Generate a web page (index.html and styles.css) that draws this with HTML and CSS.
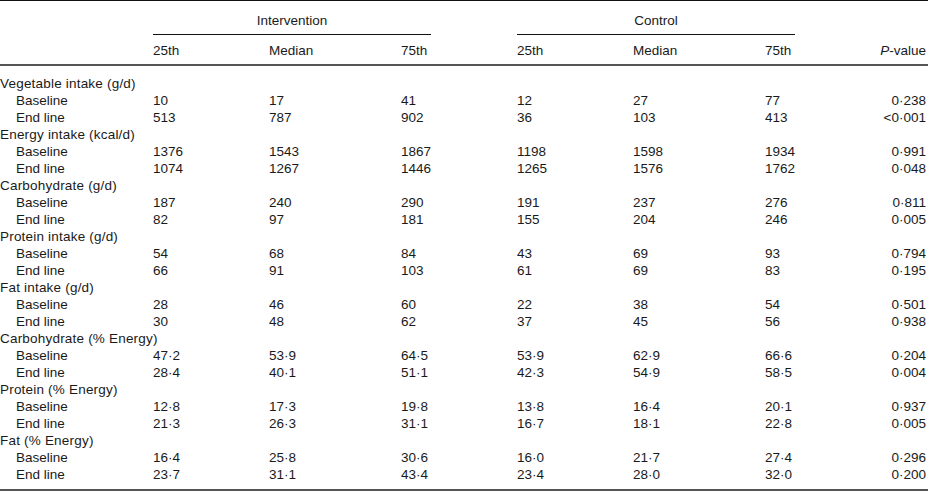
FILE: index.html
```html
<!DOCTYPE html>
<html lang="en">
<head>
<meta charset="utf-8">
<title>Dietary intake table</title>
<link rel="stylesheet" href="styles.css">
</head>
<body>
<table class="tbl">
  <colgroup>
    <col class="c-label">
    <col class="c-a">
    <col class="c-b">
    <col class="c-c">
    <col class="c-gap">
    <col class="c-a">
    <col class="c-b">
    <col class="c-c">
    <col class="c-p">
  </colgroup>
  <thead>
    <tr class="h1">
      <th></th>
      <th colspan="3" class="grp">Intervention</th>
      <th></th>
      <th colspan="3" class="grp">Control</th>
      <th></th>
    </tr>
    <tr class="h2">
      <th></th>
      <th>25th</th><th>Median</th><th>75th</th>
      <th></th>
      <th>25th</th><th>Median</th><th>75th</th>
      <th class="p"><i>P</i>-value</th>
    </tr>
  </thead>
  <tbody>
    <tr><td class="lab">Vegetable intake (g/d)</td><td></td><td></td><td></td><td></td><td></td><td></td><td></td><td></td></tr>
    <tr><td class="sub">Baseline</td><td>10</td><td>17</td><td>41</td><td></td><td>12</td><td>27</td><td>77</td><td class="p">0·238</td></tr>
    <tr><td class="sub">End line</td><td>513</td><td>787</td><td>902</td><td></td><td>36</td><td>103</td><td>413</td><td class="p">&lt;0·001</td></tr>

    <tr><td class="lab">Energy intake (kcal/d)</td><td></td><td></td><td></td><td></td><td></td><td></td><td></td><td></td></tr>
    <tr><td class="sub">Baseline</td><td>1376</td><td>1543</td><td>1867</td><td></td><td>1198</td><td>1598</td><td>1934</td><td class="p">0·991</td></tr>
    <tr><td class="sub">End line</td><td>1074</td><td>1267</td><td>1446</td><td></td><td>1265</td><td>1576</td><td>1762</td><td class="p">0·048</td></tr>

    <tr><td class="lab">Carbohydrate (g/d)</td><td></td><td></td><td></td><td></td><td></td><td></td><td></td><td></td></tr>
    <tr><td class="sub">Baseline</td><td>187</td><td>240</td><td>290</td><td></td><td>191</td><td>237</td><td>276</td><td class="p">0·811</td></tr>
    <tr><td class="sub">End line</td><td>82</td><td>97</td><td>181</td><td></td><td>155</td><td>204</td><td>246</td><td class="p">0·005</td></tr>

    <tr><td class="lab">Protein intake (g/d)</td><td></td><td></td><td></td><td></td><td></td><td></td><td></td><td></td></tr>
    <tr><td class="sub">Baseline</td><td>54</td><td>68</td><td>84</td><td></td><td>43</td><td>69</td><td>93</td><td class="p">0·794</td></tr>
    <tr><td class="sub">End line</td><td>66</td><td>91</td><td>103</td><td></td><td>61</td><td>69</td><td>83</td><td class="p">0·195</td></tr>

    <tr><td class="lab">Fat intake (g/d)</td><td></td><td></td><td></td><td></td><td></td><td></td><td></td><td></td></tr>
    <tr><td class="sub">Baseline</td><td>28</td><td>46</td><td>60</td><td></td><td>22</td><td>38</td><td>54</td><td class="p">0·501</td></tr>
    <tr><td class="sub">End line</td><td>30</td><td>48</td><td>62</td><td></td><td>37</td><td>45</td><td>56</td><td class="p">0·938</td></tr>

    <tr><td class="lab">Carbohydrate (% Energy)</td><td></td><td></td><td></td><td></td><td></td><td></td><td></td><td></td></tr>
    <tr><td class="sub">Baseline</td><td>47·2</td><td>53·9</td><td>64·5</td><td></td><td>53·9</td><td>62·9</td><td>66·6</td><td class="p">0·204</td></tr>
    <tr><td class="sub">End line</td><td>28·4</td><td>40·1</td><td>51·1</td><td></td><td>42·3</td><td>54·9</td><td>58·5</td><td class="p">0·004</td></tr>

    <tr><td class="lab">Protein (% Energy)</td><td></td><td></td><td></td><td></td><td></td><td></td><td></td><td></td></tr>
    <tr><td class="sub">Baseline</td><td>12·8</td><td>17·3</td><td>19·8</td><td></td><td>13·8</td><td>16·4</td><td>20·1</td><td class="p">0·937</td></tr>
    <tr><td class="sub">End line</td><td>21·3</td><td>26·3</td><td>31·1</td><td></td><td>16·7</td><td>18·1</td><td>22·8</td><td class="p">0·005</td></tr>

    <tr><td class="lab">Fat (% Energy)</td><td></td><td></td><td></td><td></td><td></td><td></td><td></td><td></td></tr>
    <tr><td class="sub">Baseline</td><td>16·4</td><td>25·8</td><td>30·6</td><td></td><td>16·0</td><td>21·7</td><td>27·4</td><td class="p">0·296</td></tr>
    <tr><td class="sub">End line</td><td>23·7</td><td>31·1</td><td>43·4</td><td></td><td>23·4</td><td>28·0</td><td>32·0</td><td class="p">0·200</td></tr>
  </tbody>
</table>
</body>
</html>
```

FILE: styles.css
```css
html, body {
  margin: 0;
  padding: 0;
  background: #ffffff;
}

body {
  font-family: "Liberation Sans", Arial, Helvetica, sans-serif;
  font-size: 13.5px;
  color: #1a1a1a;
}

.tbl {
  width: 928px;
  table-layout: fixed;
  border-collapse: collapse;
  border-top: 1px solid #111111;
  border-bottom: 2px solid #555555;
}

.c-label { width: 153px; }
.c-a { width: 116px; }
.c-b { width: 132px; }
.c-c { width: 30px; }
.c-gap { width: 86px; }
.c-p { width: 133px; }

.tbl th,
.tbl td {
  padding: 0;
  line-height: 17px;
  text-align: left;
  font-weight: normal;
  white-space: nowrap;
  overflow: visible;
  vertical-align: middle;
}

.h1 th {
  padding-top: 11px;
  padding-bottom: 5px;
}

.h1 th.grp {
  text-align: center;
  border-bottom: 1px solid #111111;
}

.h2 th {
  padding-top: 7px;
  padding-bottom: 5px;
  border-bottom: 2px solid #555555;
}

.tbl .p {
  text-align: right;
  padding-right: 2px;
}

.tbl td.lab {
  letter-spacing: 0.2px;
}

.tbl td.sub {
  padding-left: 16px;
}

.tbl tbody tr:first-child td {
  padding-top: 9px;
}

.tbl tbody tr:last-child td {
  padding-bottom: 6px;
}
```
